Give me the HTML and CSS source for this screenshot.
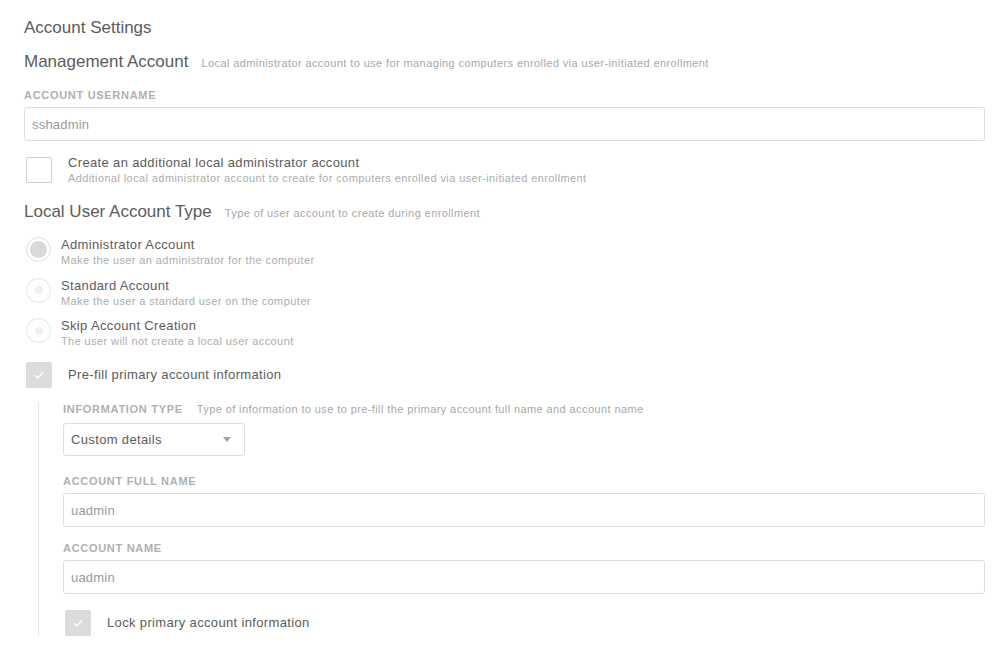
FILE: index.html
```html
<!DOCTYPE html>
<html>
<head>
<meta charset="utf-8">
<link rel="stylesheet" href="styles.css">
</head>
<body>
<div class="page">
  <h1 class="title">Account Settings</h1>

  <div class="section-head">
    <h2 class="section-title">Management Account</h2>
    <span class="section-desc">Local administrator account to use for managing computers enrolled via user-initiated enrollment</span>
  </div>

  <div class="field-label first">Account Username</div>
  <div class="input">sshadmin</div>

  <div class="check-row">
    <span class="checkbox"></span>
    <div class="check-text">
      <div class="opt-main">Create an additional local administrator account</div>
      <div class="opt-sub">Additional local administrator account to create for computers enrolled via user-initiated enrollment</div>
    </div>
  </div>

  <div class="section-head lower">
    <h2 class="section-title">Local User Account Type</h2>
    <span class="section-desc">Type of user account to create during enrollment</span>
  </div>

  <div class="radio-list">
    <div class="radio-row">
      <span class="radio selected"><span class="dot"></span></span>
      <div class="check-text">
        <div class="opt-main">Administrator Account</div>
        <div class="opt-sub">Make the user an administrator for the computer</div>
      </div>
    </div>
    <div class="radio-row">
      <span class="radio"><span class="dot"></span></span>
      <div class="check-text">
        <div class="opt-main">Standard Account</div>
        <div class="opt-sub">Make the user a standard user on the computer</div>
      </div>
    </div>
    <div class="radio-row">
      <span class="radio"><span class="dot"></span></span>
      <div class="check-text">
        <div class="opt-main">Skip Account Creation</div>
        <div class="opt-sub">The user will not create a local user account</div>
      </div>
    </div>
  </div>

  <div class="check-row prefill">
    <span class="checkbox checked">
      <svg width="12" height="10" viewBox="0 0 12 10"><path d="M2 5.2 L4.8 8 L10 2.5" fill="none" stroke="#fff" stroke-width="1.3"/></svg>
    </span>
    <div class="opt-main">Pre-fill primary account information</div>
  </div>

  <div class="nested">
    <div class="label-row">
      <span class="field-label inline">Information Type</span>
      <span class="section-desc">Type of information to use to pre-fill the primary account full name and account name</span>
    </div>
    <div class="select">
      <span>Custom details</span>
      <span class="caret"></span>
    </div>

    <div class="field-label fullname">Account Full Name</div>
    <div class="input">uadmin</div>

    <div class="field-label accname">Account Name</div>
    <div class="input">uadmin</div>

    <div class="check-row lock">
      <span class="checkbox checked">
        <svg width="12" height="10" viewBox="0 0 12 10"><path d="M2 5.2 L4.8 8 L10 2.5" fill="none" stroke="#fff" stroke-width="1.3"/></svg>
      </span>
      <div class="opt-main">Lock primary account information</div>
    </div>
  </div>
</div>
</body>
</html>
```

FILE: styles.css
```css
html, body {
  margin: 0;
  padding: 0;
  background: #fff;
}

body {
  font-family: "Liberation Sans", Arial, sans-serif;
  color: #555;
}

.page {
  padding: 18px 12px 0 24px;
}

.title {
  margin: 0;
  font-size: 17px;
  line-height: 20px;
  font-weight: normal;
  color: #5c5c5c;
}

.section-head {
  display: flex;
  align-items: baseline;
  gap: 13px;
  margin-top: 14px;
}

.section-head.lower {
  margin-top: 17px;
}

.section-title {
  margin: 0;
  font-size: 17px;
  line-height: 20px;
  font-weight: normal;
  color: #5c5c5c;
}

.section-desc {
  font-size: 11px;
  line-height: 14px;
  letter-spacing: 0.4px;
  color: #a8a8a8;
}

.field-label {
  font-size: 11px;
  line-height: 14px;
  font-weight: bold;
  text-transform: uppercase;
  letter-spacing: 0.7px;
  color: #b0b0b0;
  margin-bottom: 5px;
}

.field-label.first {
  margin-top: 16px;
}

.field-label.fullname {
  margin-top: 18px;
}

.field-label.accname {
  margin-top: 14px;
}

.input {
  box-sizing: border-box;
  height: 34px;
  border: 1px solid #dedede;
  border-radius: 3px;
  padding: 0 7px;
  display: flex;
  align-items: center;
  font-size: 13px;
  letter-spacing: 0.2px;
  color: #9a9a9a;
}

.check-row {
  display: flex;
  align-items: center;
  gap: 16px;
  margin-top: 14px;
}

.check-row.prefill {
  margin-top: 14px;
}

.check-row.lock {
  margin-top: 16px;
}

.checkbox {
  box-sizing: border-box;
  width: 26px;
  height: 26px;
  margin-left: 2px;
  border: 1px solid #cfcfcf;
  border-radius: 2px;
  flex: none;
  display: flex;
  align-items: center;
  justify-content: center;
}

.checkbox.checked {
  background: #dcdcdc;
  border-color: #dcdcdc;
}

.opt-main {
  font-size: 13px;
  line-height: 16px;
  letter-spacing: 0.35px;
  color: #5c5c5c;
}

.opt-sub {
  font-size: 11px;
  line-height: 14px;
  letter-spacing: 0.4px;
  color: #adadad;
}

.radio-list {
  display: flex;
  flex-direction: column;
  gap: 10.5px;
  margin-top: 15px;
}

.radio-row {
  display: flex;
  align-items: flex-start;
  gap: 10px;
}

.radio {
  box-sizing: border-box;
  width: 25px;
  height: 25px;
  margin-left: 2px;
  border: 1px solid #e3e3e3;
  border-radius: 50%;
  flex: none;
  display: flex;
  align-items: center;
  justify-content: center;
}

.radio .dot {
  width: 8px;
  height: 8px;
  border-radius: 50%;
  background: #f0f0f0;
}

.radio.selected {
  border-color: #dedede;
}

.radio.selected .dot {
  width: 17px;
  height: 17px;
  background: #d9d9d9;
}

.nested {
  margin: 14px 0 0 14px;
  border-left: 1px solid #e6e6e6;
  padding-left: 24px;
}

.label-row {
  display: flex;
  align-items: baseline;
  gap: 14px;
}

.field-label.inline {
  margin-bottom: 0;
}

.select {
  box-sizing: border-box;
  width: 182px;
  height: 33px;
  margin-top: 7px;
  border: 1px solid #dedede;
  border-radius: 3px;
  padding: 0 13px 0 7px;
  display: flex;
  align-items: center;
  justify-content: space-between;
  font-size: 13px;
  letter-spacing: 0.35px;
  color: #5c5c5c;
}

.caret {
  width: 0;
  height: 0;
  border-left: 4.5px solid transparent;
  border-right: 4.5px solid transparent;
  border-top: 5px solid #a0a0a8;
}
```
